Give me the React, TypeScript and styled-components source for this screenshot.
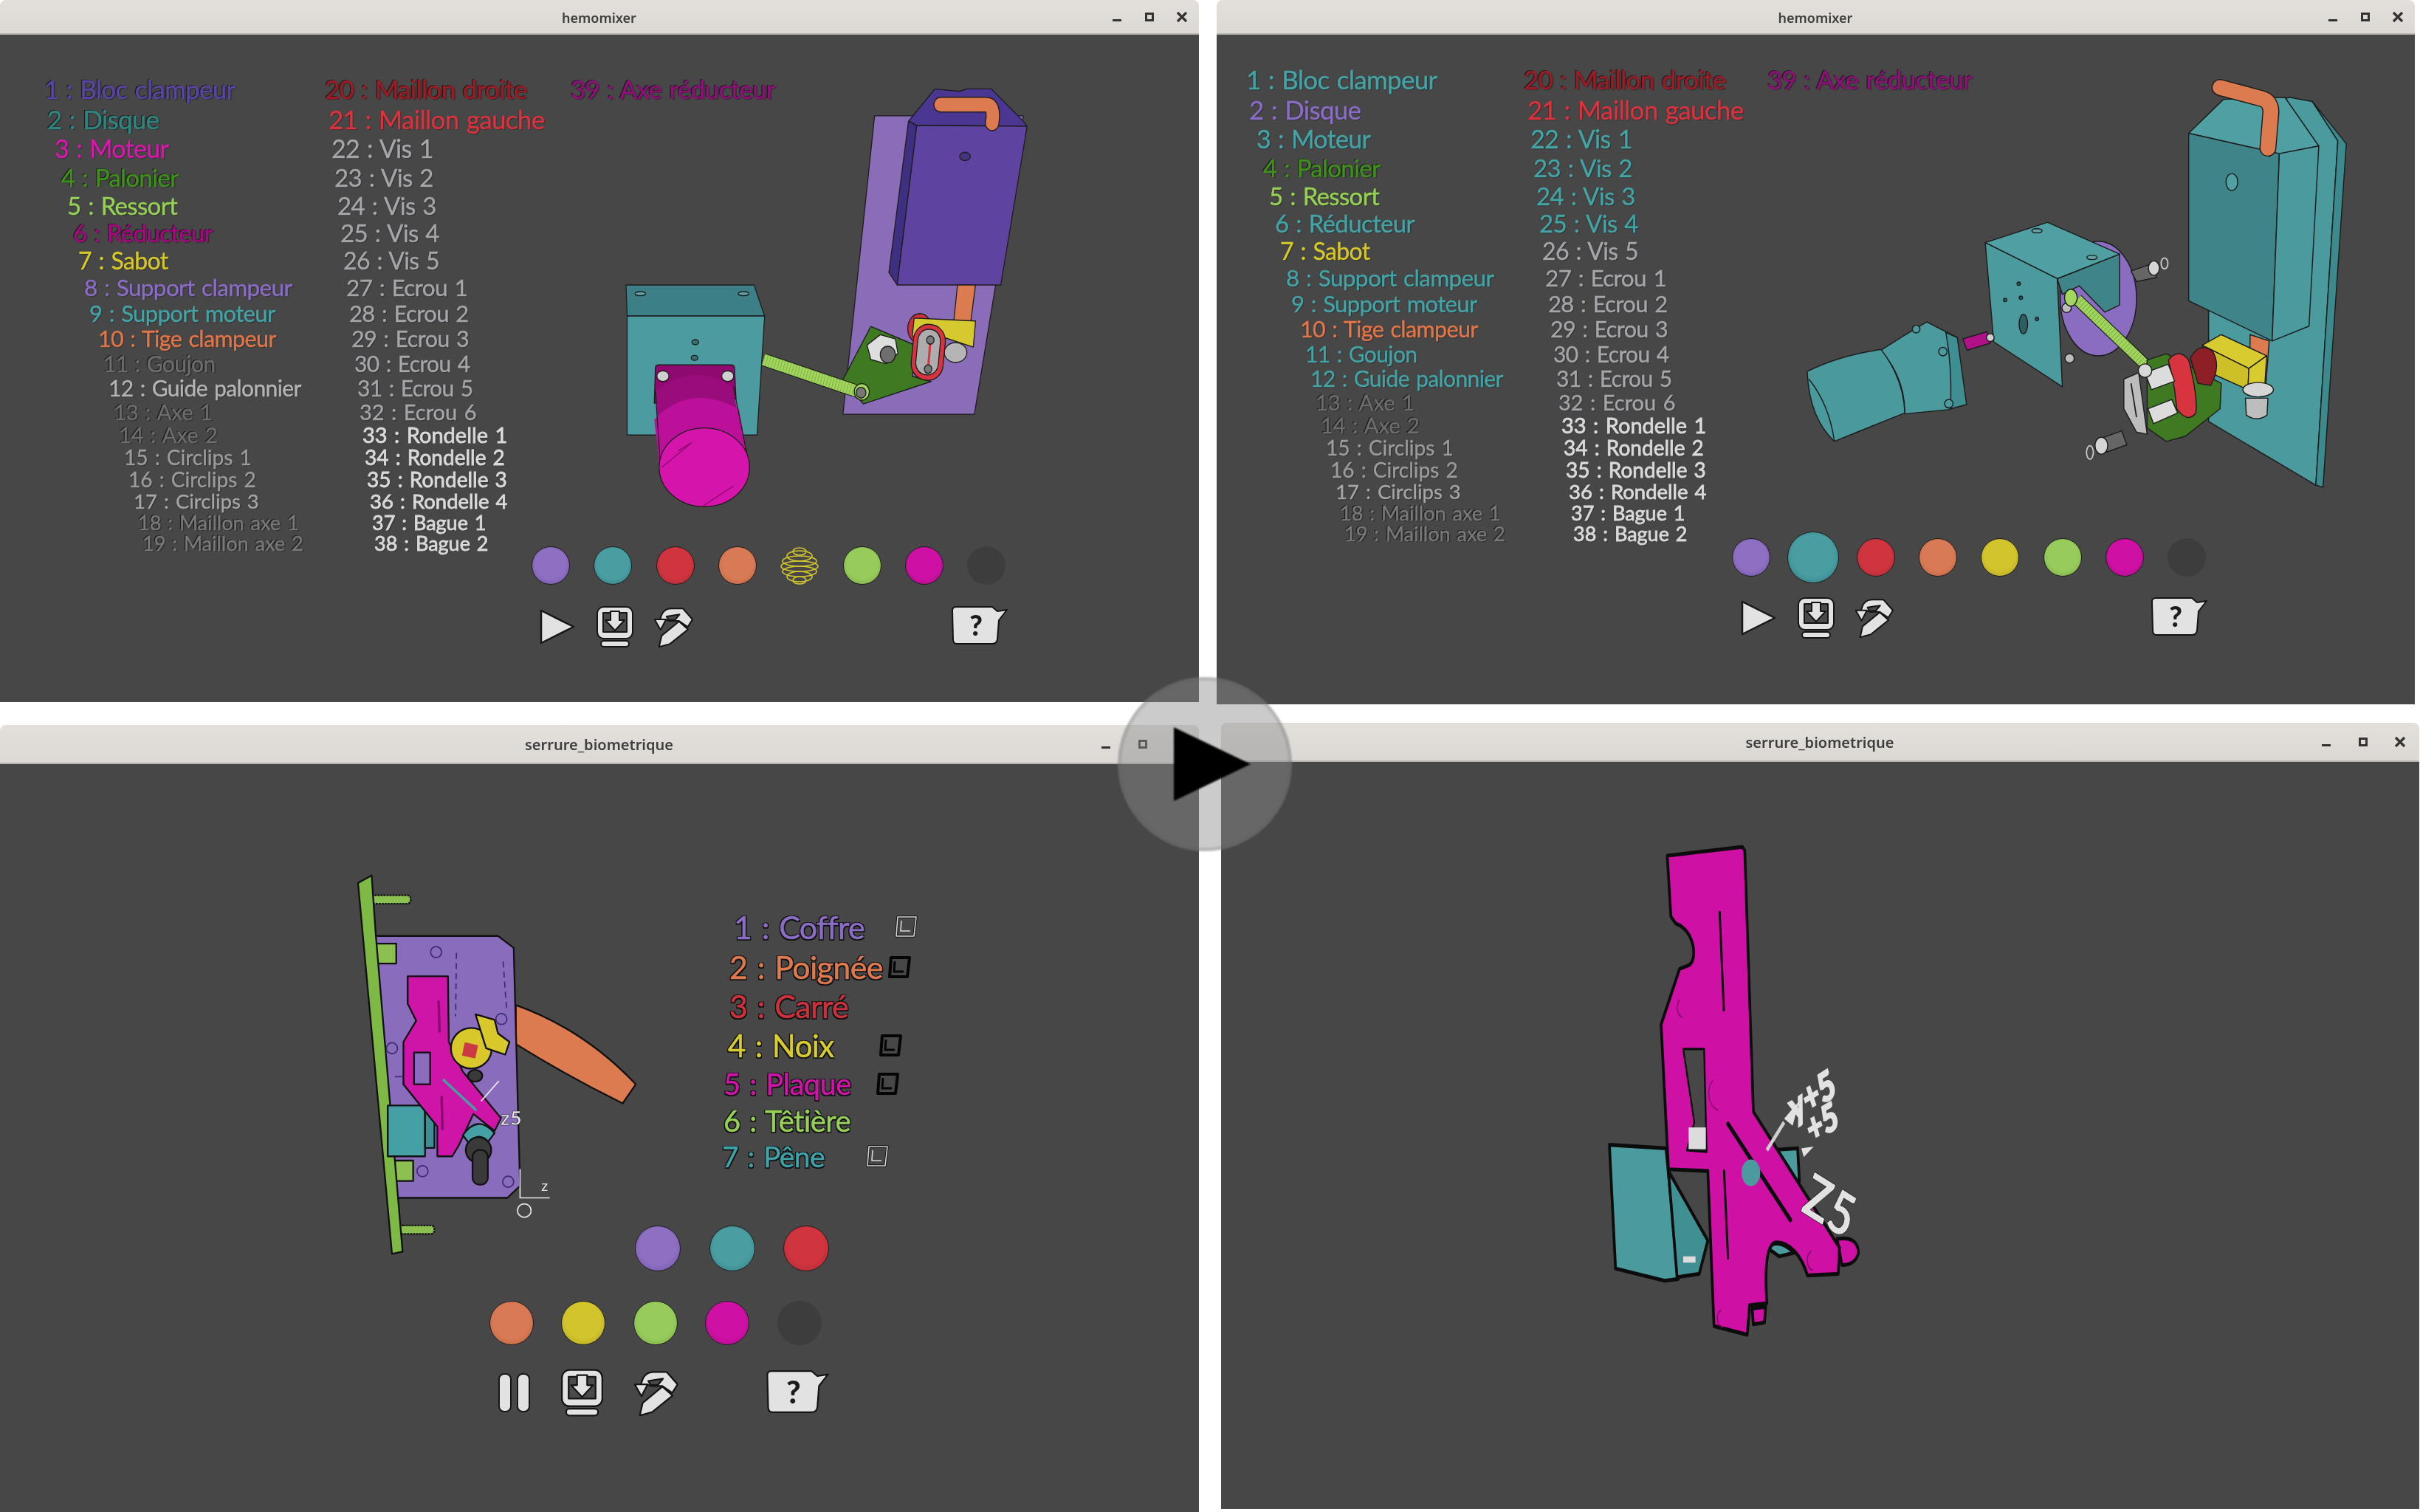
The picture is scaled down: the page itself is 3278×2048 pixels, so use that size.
import React from 'react';
import styled, { createGlobalStyle } from 'styled-components';

const GlobalStyle = createGlobalStyle`
  html, body {
    margin: 0;
    padding: 0;
    background: #fff;
    overflow: hidden;
  }
`;

const Page = styled.div`
  position: relative;
  width: 3278px;
  height: 2048px;
  background: #fff;
`;

const WindowRow = styled.div<{ $gap: number; $top?: number; $h: number }>`
  display: flex;
  align-items: flex-start;
  gap: ${({ $gap }) => $gap}px;
  height: ${({ $h }) => $h}px;
  margin-top: ${({ $top }) => $top ?? 0}px;
`;

const Window = styled.section<{ $w: number; $h: number; $top?: number }>`
  display: flex;
  flex-direction: column;
  flex: none;
  width: ${({ $w }) => $w}px;
  height: ${({ $h }) => $h}px;
  margin-top: ${({ $top }) => $top ?? 0}px;
`;

const TitleBar = styled.header<{ $h: number }>`
  display: grid;
  grid-template-columns: 1fr auto 1fr;
  align-items: center;
  flex: none;
  box-sizing: border-box;
  height: ${({ $h }) => $h}px;
  padding-right: 1px;
  background: linear-gradient(#e3e0dc, #dcd9d5);
  border-bottom: 2px solid #b7b5b0;
  border-radius: 8px 8px 0 0;
  filter: blur(0.4px);
`;

const Title = styled.h1<{ $size: number }>`
  grid-column: 2;
  margin: 2px 0 0;
  font: 600 ${({ $size }) => $size}px 'Noto Sans', 'Open Sans', sans-serif;
  color: #3e3e3e;
`;

const Controls = styled.div`
  grid-column: 3;
  display: flex;
  justify-content: flex-end;
`;

const Control = styled.span<{ $w: number }>`
  display: flex;
  align-items: center;
  justify-content: center;
  width: ${({ $w }) => $w}px;
  height: 24px;
`;

const MinIcon = styled.i`
  display: block;
  width: 12px;
  height: 3px;
  margin-top: 10px;
  background: #333;
`;

const MaxIcon = styled.i`
  display: block;
  box-sizing: border-box;
  width: 12px;
  height: 12px;
  border: 3px solid #333;
`;

const View = styled.main<{ $column?: boolean; $top?: number; $left?: number }>`
  flex: 1;
  display: flex;
  flex-direction: ${({ $column }) => ($column ? 'column' : 'row')};
  align-items: flex-start;
  box-sizing: border-box;
  padding: ${({ $top }) => $top ?? 0}px 0 0 ${({ $left }) => $left ?? 0}px;
  background: #474747;
  filter: blur(0.6px);
`;

const Legend = styled.div<{ $left: number; $top: number; $w: number }>`
  display: flex;
  flex: none;
  width: ${({ $w }) => $w}px;
  margin: ${({ $top }) => $top}px 0 0 ${({ $left }) => $left}px;
`;

const LegendColumn = styled.ul<{ $w: number }>`
  flex: none;
  width: ${({ $w }) => $w}px;
  margin: 0;
  padding: 0;
  list-style: none;
`;

const LegendRow = styled.li<{
  $indent: number;
  $h: number;
  $size: number;
  $color: string;
  $dim?: boolean;
  $strong?: boolean;
  $tight?: boolean;
}>`
  height: ${({ $h }) => $h}px;
  padding-left: ${({ $indent }) => $indent}px;
  font-family: Lato, 'Open Sans', sans-serif;
  font-size: ${({ $size }) => $size}px;
  line-height: ${({ $h }) => $h}px;
  letter-spacing: ${({ $tight }) => ($tight ? '-0.02em' : '0')};
  white-space: nowrap;
  word-spacing: 2px;
  color: ${({ $color }) => $color};
  -webkit-text-stroke: ${({ $strong }) => ($strong ? '0.9px' : '0.45px')} ${({ $color }) => $color};
  text-shadow: ${({ $dim }) =>
    $dim
      ? '-1.5px -1px 0 rgba(20,20,20,.8), 1.5px 1px 1px rgba(20,20,20,.5)'
      : '1px 1px 1px rgba(25,25,25,.6), -1px 0 0 rgba(25,25,25,.35)'};
`;

const PartList = styled.ul`
  margin: 97px 0 0 0;
  padding: 0;
  list-style: none;
`;

const PartRow = styled.li<{ $indent: number; $h: number; $size: number; $w: number; $color: string }>`
  display: flex;
  align-items: center;
  justify-content: space-between;
  box-sizing: border-box;
  width: ${({ $w }) => $w}px;
  height: ${({ $h }) => $h}px;
  margin-left: ${({ $indent }) => $indent}px;
  font-family: Lato, 'Open Sans', sans-serif;
  font-size: ${({ $size }) => $size}px;
  letter-spacing: -0.015em;
  white-space: nowrap;
  word-spacing: 3px;
  color: ${({ $color }) => $color};
  -webkit-text-stroke: 0.5px ${({ $color }) => $color};
  text-shadow: 1.5px 1.5px 0 #111, -1.5px -1.5px 0 #111, 1.5px -1.5px 0 #111, -1.5px 1.5px 0 #111;
`;

const Stage = styled.div<{ $top: number }>`
  display: flex;
  flex-direction: column;
  flex: none;
  margin-top: ${({ $top }) => $top}px;
`;

const Scene = styled.svg<{ $w: number; $h: number }>`
  display: block;
  flex: none;
  overflow: visible;
  width: ${({ $w }) => $w}px;
  height: ${({ $h }) => $h}px;
`;

const Palette = styled.div<{ $left: number; $top: number }>`
  display: flex;
  align-items: center;
  margin: ${({ $top }) => $top}px 0 0 ${({ $left }) => $left}px;
`;

const Slot = styled.span<{ $w: number; $h: number }>`
  display: flex;
  align-items: center;
  justify-content: center;
  flex: none;
  width: ${({ $w }) => $w}px;
  height: ${({ $h }) => $h}px;
`;

const Swatch = styled.span<{ $color: string; $edge: string; $size: number }>`
  display: block;
  box-sizing: border-box;
  width: ${({ $size }) => $size}px;
  height: ${({ $size }) => $size}px;
  border-radius: 50%;
  border: 1.5px solid #1f1f1f;
  background: radial-gradient(circle at 50% 45%, ${({ $color }) => $color} 55%, ${({ $edge }) => $edge} 100%);
`;

const GhostSwatch = styled.span<{ $size: number }>`
  display: block;
  width: ${({ $size }) => $size}px;
  height: ${({ $size }) => $size}px;
  border-radius: 50%;
  background: #3d3d3d;
`;

const Toolbar = styled.div<{ $left: number; $top: number; $gap: number }>`
  display: flex;
  align-items: center;
  gap: ${({ $gap }) => $gap}px;
  margin: ${({ $top }) => $top}px 0 0 ${({ $left }) => $left}px;
`;

const HelpSlot = styled.span<{ $left: number }>`
  display: block;
  margin-left: ${({ $left }) => $left}px;
`;

const Split = styled.div`
  display: flex;
  align-items: flex-start;
  padding-left: 400px;
`;

const SideColumn = styled.div`
  display: flex;
  flex-direction: column;
`;

const PlayOverlay = styled.div`
  position: absolute;
  left: 1514px;
  top: 917px;
  width: 236px;
  height: 236px;
  box-sizing: border-box;
  display: flex;
  align-items: center;
  justify-content: center;
  padding-left: 20px;
  border-radius: 50%;
  background: rgba(141, 141, 141, 0.457);
  border: 5px solid rgba(90, 90, 90, 0.18);
  filter: blur(0.8px);
`;

const names = [
  'Bloc clampeur', 'Disque', 'Moteur', 'Palonier', 'Ressort', 'Réducteur', 'Sabot', 'Support clampeur',
  'Support moteur', 'Tige clampeur', 'Goujon', 'Guide palonnier', 'Axe 1', 'Axe 2', 'Circlips 1', 'Circlips 2',
  'Circlips 3', 'Maillon axe 1', 'Maillon axe 2',
];
const namesRight = [
  'Maillon droite', 'Maillon gauche', 'Vis 1', 'Vis 2', 'Vis 3', 'Vis 4', 'Vis 5', 'Ecrou 1', 'Ecrou 2', 'Ecrou 3',
  'Ecrou 4', 'Ecrou 5', 'Ecrou 6', 'Rondelle 1', 'Rondelle 2', 'Rondelle 3', 'Rondelle 4', 'Bague 1', 'Bague 2',
];
const rowHeights = [41, 40, 40, 38, 38, 37, 37, 36, 34, 34, 34, 33, 31, 31, 31, 29, 30, 28, 28];
const rowSizes = [35, 35, 34, 33, 33, 33, 32, 31.5, 31, 30.5, 30, 30, 29, 29, 28, 28, 27.5, 27, 27];
const indentsLeft = [0, 4, 14, 23, 31, 39, 46, 54, 61, 73, 80, 87, 94, 101, 108, 114, 121, 127, 133];
const indentsRight = [0, 5, 9, 13, 17, 21, 25, 29, 33, 36, 40, 44, 47, 51, 54, 57, 61, 64, 67];

const PURPLE = '#8c6dc6';
const TEAL = '#45a3a6';
const GREY = '#a5a5aa';
const FAINT = '#6d6d6d';

type Tone = { color: string; dim?: boolean; strong?: boolean };

const frontTones: Tone[] = [
  { color: '#5a45a2', dim: true }, { color: '#2f8680', dim: true }, { color: '#d61aa9' },
  { color: '#40901e', dim: true }, { color: '#96d057' }, { color: '#a50a80', dim: true },
  { color: '#d6c72d' }, { color: PURPLE }, { color: TEAL }, { color: '#e0764a' },
  { color: FAINT, dim: true }, { color: '#b4b4b4' }, { color: FAINT, dim: true }, { color: FAINT, dim: true },
  { color: '#9b9b9b' }, { color: '#9b9b9b' }, { color: '#a5a5a5' }, { color: '#7a7a7a', dim: true }, { color: '#7a7a7a', dim: true },
];
const explodedTones: Tone[] = [
  { color: TEAL }, { color: PURPLE }, { color: TEAL }, { color: '#40901e', dim: true }, { color: '#96d057' },
  { color: TEAL }, { color: '#d6c72d' }, { color: TEAL }, { color: TEAL }, { color: '#e0764a' },
  { color: TEAL }, { color: TEAL }, { color: FAINT, dim: true }, { color: FAINT, dim: true },
  { color: '#9b9b9b' }, { color: '#9b9b9b' }, { color: '#a5a5a5' }, { color: '#7a7a7a', dim: true }, { color: '#7a7a7a', dim: true },
];
const rightTones = (tealUpTo: number): Tone[] =>
  namesRight.map((_, i) => {
    if (i === 0) return { color: '#9c1c26', dim: true };
    if (i === 1) return { color: '#d8343f' };
    if (i < tealUpTo) return { color: TEAL };
    if (i < 13) return { color: GREY };
    return { color: '#d9d9d9', strong: true };
  });

const HemoLegend: React.FC<{
  left: number;
  top: number;
  w: number;
  firstW: number;
  secondW: number;
  tones: Tone[];
  tonesRight: Tone[];
}> = ({ left, top, w, firstW, secondW, tones, tonesRight }) => (
  <Legend $left={left} $top={top} $w={w}>
    <LegendColumn $w={firstW}>
      {names.map((name, i) => (
        <LegendRow
          key={name}
          $indent={indentsLeft[i]}
          $h={rowHeights[i]}
          $size={rowSizes[i]}
          $color={tones[i].color}
          $dim={tones[i].dim}
          $tight={i < 12}
        >
          {i + 1} : {name}
        </LegendRow>
      ))}
    </LegendColumn>
    <LegendColumn $w={secondW}>
      {namesRight.map((name, i) => (
        <LegendRow
          key={name}
          $indent={indentsRight[i]}
          $h={rowHeights[i]}
          $size={rowSizes[i]}
          $color={tonesRight[i].color}
          $dim={tonesRight[i].dim}
          $strong={tonesRight[i].strong}
          $tight={i < 12}
        >
          {i + 20} : {name}
        </LegendRow>
      ))}
    </LegendColumn>
    <LegendColumn $w={0}>
      <LegendRow $indent={0} $h={41} $size={35} $color="#8e1078" $dim $tight>
        39 : Axe réducteur
      </LegendRow>
    </LegendColumn>
  </Legend>
);

const swatchColors: Record<string, [string, string]> = {
  purple: ['#8e6fc2', '#6b4fa6'],
  teal: ['#4a9ea2', '#2f7a80'],
  red: ['#cf343f', '#a82a34'],
  orange: ['#d87a55', '#b85f3e'],
  yellow: ['#d2c42d', '#a89c20'],
  green: ['#97cb5b', '#74a845'],
  pink: ['#cf10a5', '#a00c80'],
};

const WireSphere: React.FC<{ size: number }> = ({ size }) => (
  <svg width={size + 2} height={size + 2} viewBox="0 0 54 54" fill="none" stroke="#d6c72d" strokeWidth="1.6">
    <ellipse cx="27" cy="8" rx="9" ry="5" />
    <ellipse cx="27" cy="14" rx="17" ry="7" />
    <ellipse cx="27" cy="21" rx="23" ry="7" />
    <ellipse cx="27" cy="28" rx="25" ry="7" />
    <ellipse cx="27" cy="35" rx="23" ry="7" />
    <ellipse cx="27" cy="42" rx="17" ry="7" />
    <ellipse cx="27" cy="47" rx="9" ry="5" />
  </svg>
);

const Dot: React.FC<{ kind: string; size: number }> = ({ kind, size }) => {
  if (kind === 'ghost') return <GhostSwatch $size={size} />;
  if (kind === 'wire') return <WireSphere size={size} />;
  const [color, edge] = swatchColors[kind];
  return <Swatch $color={color} $edge={edge} $size={size} />;
};

const PlayIcon: React.FC<{ w: number; h: number }> = ({ w, h }) => (
  <svg width={w} height={h} viewBox="0 0 50 50">
    <path d="M3 3 L47 25 L3 47 Z" fill="#e2e2e2" stroke="#161616" strokeWidth="2.5" strokeLinejoin="round" />
  </svg>
);

const PauseIcon: React.FC<{ w: number; h: number }> = ({ w, h }) => (
  <svg width={w} height={h} viewBox="0 0 45 55" fill="#e2e2e2" stroke="#161616" strokeWidth="2">
    <rect x="2" y="2" width="16" height="51" rx="7" />
    <rect x="27" y="2" width="16" height="51" rx="7" />
  </svg>
);

const SaveIcon: React.FC<{ w: number; h: number }> = ({ w, h }) => (
  <svg width={w} height={h} viewBox="0 0 50 56" stroke="#141414" strokeWidth="2" strokeLinejoin="round">
    <rect x="1" y="1" width="48" height="43" rx="9" fill="#e2e2e2" />
    <rect x="9" y="9" width="32" height="26" fill="#4a4a4a" />
    <path d="M19 7 H31 V19 H38 L25 33 L12 19 H19 Z" fill="#e2e2e2" />
    <rect x="6" y="47" width="38" height="8" rx="4" fill="#e2e2e2" />
  </svg>
);

const RepairIcon: React.FC<{ w: number; h: number }> = ({ w, h }) => (
  <svg width={w} height={h} viewBox="0 0 157 162" stroke="#141414" strokeWidth="6" strokeLinejoin="round">
    <path d="M25 50 C30 18 48 6 70 6 L115 6 L154 50 L135 80 L100 56 L62 56 L48 52 Z" fill="#e2e2e2" />
    <path d="M2 50 H48 L26 92 Z" fill="#e2e2e2" />
    <path d="M50 38 L102 30 L84 52 L58 52 Z" fill="#4a4a4a" />
    <path d="M20 160 L30 116 L100 58 L136 90 L64 148 Z" fill="#e2e2e2" />
  </svg>
);

const HelpIcon: React.FC<{ w: number; h: number }> = ({ w, h }) => (
  <svg width={w} height={h} viewBox="0 0 76 54">
    <path
      d="M6 2 H55 L62 8 L75 6 L64 20 L62 46 Q61 52 55 52 H7 Q2 52 2 46 L1 7 Q1 2 6 2 Z"
      fill="#e2e2e2"
      stroke="#141414"
      strokeWidth="2"
      strokeLinejoin="round"
    />
    <text x="33" y="41" textAnchor="middle" fontFamily="Lato, sans-serif" fontWeight="900" fontSize="38" fill="#1b1b1b">
      ?
    </text>
  </svg>
);

const LockIcon: React.FC<{ open?: boolean; size: number }> = ({ open, size }) => (
  <svg width={size} height={size} viewBox="0 0 32 32" fill="none">
    {open ? (
      <>
        <path d="M5 3 H30 L27 29 H3 Z" stroke="#111" strokeWidth="3.5" strokeLinejoin="round" />
        <path d="M5 3 H30 L27 29 H3 Z" stroke="#d8d8d8" strokeWidth="1.6" strokeLinejoin="round" />
        <path d="M10 8 L9 22 H22" stroke="#d8d8d8" strokeWidth="1.6" />
      </>
    ) : (
      <>
        <path d="M5 3 H30 L27 29 H3 Z" stroke="#050505" strokeWidth="4" strokeLinejoin="round" />
        <path d="M10 8 L9 22 H22" stroke="#050505" strokeWidth="3" />
      </>
    )}
  </svg>
);

const Spring: React.FC<{ x1: number; y1: number; x2: number; y2: number; w: number }> = ({ x1, y1, x2, y2, w }) => (
  <>
    <line x1={x1} y1={y1} x2={x2} y2={y2} stroke="#1a1a1a" strokeWidth={w + 4} />
    <line x1={x1} y1={y1} x2={x2} y2={y2} stroke="#a3d65e" strokeWidth={w} />
    <line x1={x1} y1={y1} x2={x2} y2={y2} stroke="#7fb245" strokeWidth={w} strokeDasharray="2 6" />
  </>
);

// vue de face, coordonnées reprises à l'échelle 1.96 x 1.78
const FrontScene: React.FC = () => (
  <Scene $w={800} $h={640} viewBox="0 0 1568 1140" preserveAspectRatio="none">
    <g stroke="#1c1c1c" strokeWidth="2.5" strokeLinejoin="round">
      <path d="M950 137 L1345 137 L1215 857 L866 857 Z" fill="#8a6cb8" />
      <path d="M1040 150 L1110 72 L1175 78 L1195 72 L1260 72 L1345 150 L1355 162 L1062 160 Z" fill="#4b3692" />
      <path d="M1040 150 L1062 160 L1010 545 L988 515 Z" fill="#3e2f80" />
      <path d="M1062 160 L1355 162 L1285 545 L1010 545 Z" fill="#5e43a0" />
      <ellipse cx="1190" cy="235" rx="14" ry="10" fill="#46357f" />
      <path d="M1125 110 L1245 110 Q1270 110 1262 155" fill="none" stroke="#1c1c1c" strokeWidth="38" strokeLinecap="round" />
      <path d="M1125 110 L1245 110 Q1270 110 1262 155" fill="none" stroke="#dd7b50" strokeWidth="33" strokeLinecap="round" />
      <path d="M1170 545 L1218 545 L1205 635 L1160 635 Z" fill="#dd7b50" />
      <ellipse cx="1070" cy="650" rx="32" ry="36" fill="#c8323c" />
      <path d="M1055 625 L1218 632 L1212 695 L1135 672 L1050 670 Z" fill="#d6c82f" />
      <ellipse cx="1165" cy="708" rx="30" ry="24" fill="#b5b5b5" />
      <path d="M940 645 L1062 692 L1050 765 L1100 778 L920 832 L865 775 Z" fill="#3f7a22" />
      <polygon points="930,690 965,665 1005,675 1012,710 980,735 940,725" fill="#dedede" />
      <ellipse cx="985" cy="713" rx="20" ry="20" fill="#6f6f6f" />
      <rect x="1050" y="640" width="85" height="135" rx="40" fill="#d8343f" transform="rotate(6 1092 707)" />
      <rect x="1062" y="652" width="60" height="110" rx="28" fill="#adadb0" transform="rotate(6 1092 707)" />
      <line x1="1098" y1="680" x2="1092" y2="748" stroke="#d8343f" strokeWidth="6" />
      <circle cx="1098" cy="678" r="10" fill="#777" />
      <circle cx="1092" cy="748" r="10" fill="#777" />
    </g>
    <g stroke="#1c1c1c" strokeWidth="2.5" strokeLinejoin="round">
      <path d="M290 545 L630 545 L658 620 L293 620 Z" fill="#3c7f86" />
      <path d="M293 620 L658 620 L638 907 L293 907 Z" fill="#4b9ba0" />
      <ellipse cx="328" cy="566" rx="14" ry="5" fill="#5fa5a8" />
      <ellipse cx="602" cy="566" rx="14" ry="5" fill="#5fa5a8" />
      <ellipse cx="474" cy="683" rx="9" ry="6" fill="#3b6f72" />
      <ellipse cx="472" cy="721" rx="9" ry="6" fill="#3b6f72" />
    </g>
    <Spring x1={655} y1={725} x2={905} y2={802} w={28} />
    <g stroke="#1c1c1c" strokeWidth="2.5" strokeLinejoin="round">
      <circle cx="916" cy="803" r="20" fill="#a3d65e" />
      <circle cx="914" cy="805" r="13" fill="#777" />
      <path d="M368 745 Q368 738 378 738 L568 738 Q578 738 578 745 L582 820 L365 830 Z" fill="#8e0a70" />
      <ellipse cx="388" cy="765" rx="16" ry="13" fill="#cfcfcf" />
      <ellipse cx="560" cy="765" rx="16" ry="13" fill="#cfcfcf" />
      <path d="M370 800 Q470 730 572 790 L615 975 L380 990 Z" fill="#9a0c7c" stroke="none" />
      <path d="M365 870 Q460 780 590 845 L618 985 L380 990 Z" fill="#bd109a" stroke="none" />
      <path d="M368 800 L382 990 M575 790 L618 985" fill="none" />
      <ellipse cx="498" cy="985" rx="120" ry="95" fill="#d414aa" />
    </g>
    <path d="M385 985 L465 925 L428 945 M495 1078 L575 1030" fill="none" stroke="#8a0a6e" strokeWidth="2.5" />
  </Scene>
);

// vue éclatée
const ExplodedScene: React.FC = () => (
  <Scene $w={880} $h={620} viewBox="35 0 1533 1080" preserveAspectRatio="none">
    <g stroke="#1c1c1c" strokeWidth="2.5" strokeLinejoin="round">
      <path d="M1395 125 L1450 135 L1510 228 L1458 1040 L1205 890 L1205 200 Z" fill="#4a9a9e" />
      <path d="M1450 135 L1530 235 L1475 1045 L1458 1040 L1510 228 Z" fill="#3c8a8e" />
      <path d="M1158 210 L1240 130 L1385 125 L1465 240 L1372 258 Z" fill="#4f9fa3" />
      <path d="M1158 210 L1372 258 L1355 700 L1158 605 Z" fill="#3f8488" />
      <path d="M1372 258 L1465 240 L1442 665 L1355 700 Z" fill="#4a9a9e" />
      <ellipse cx="1260" cy="325" rx="14" ry="20" fill="#4f9fa3" />
      <path d="M1232 102 L1330 128 Q1352 134 1352 160 L1345 245" fill="none" stroke="#1c1c1c" strokeWidth="40" strokeLinecap="round" />
      <path d="M1232 102 L1330 128 Q1352 134 1352 160 L1345 245" fill="none" stroke="#dc7a50" strokeWidth="35" strokeLinecap="round" />
      <path d="M1303 685 L1348 700 L1340 805 L1302 800 Z" fill="#dc7a50" />
      <path d="M1190 710 L1235 685 L1342 735 L1300 765 Z" fill="#d8cb2f" />
      <path d="M1190 710 L1300 765 L1298 815 L1220 780 Z" fill="#cdbf28" />
      <path d="M1300 765 L1342 735 L1338 800 L1298 815 Z" fill="#d8cb2f" />
      <ellipse cx="1322" cy="815" rx="36" ry="17" fill="#d5d5d5" />
      <path d="M1292 835 L1345 835 L1343 875 Q1318 892 1294 875 Z" fill="#bdbdbd" />
    </g>
    <g stroke="#1c1c1c" strokeWidth="2.5" strokeLinejoin="round">
      <ellipse cx="945" cy="600" rx="90" ry="135" fill="#8a6cc0" />
      <path d="M848 553 L995 495 L995 615 L960 632 L900 570 L860 590 Z" fill="#3f8488" />
      <path d="M678 468 L825 420 L995 495 L848 553 Z" fill="#4f9fa3" />
      <path d="M678 468 L848 553 L860 808 L698 702 Z" fill="#4a9a9e" />
      <ellipse cx="768" cy="660" rx="10" ry="23" fill="#2f5f62" />
      <ellipse cx="800" cy="440" rx="12" ry="5" fill="#5fa5a8" />
      <ellipse cx="930" cy="503" rx="12" ry="5" fill="#5fa5a8" />
      <circle cx="757" cy="565" r="4" fill="#2f5f62" />
      <circle cx="725" cy="603" r="4" fill="#2f5f62" />
      <circle cx="762" cy="598" r="4" fill="#2f5f62" />
      <circle cx="800" cy="648" r="4" fill="#2f5f62" />
      <path d="M432 722 Q480 690 540 655 L612 692 L632 850 L590 862 L488 872 Q490 790 432 722 Z" fill="#4a9a9e" />
      <path d="M585 680 L612 692 L634 850 L596 860 Q600 760 585 680 Z" fill="#3f8e92" />
      <path d="M258 772 Q330 735 432 720 Q486 790 488 870 Q400 905 322 937 Q262 880 258 772 Z" fill="#49999d" />
      <path d="M262 790 Q310 850 322 937" fill="none" />
      <circle cx="515" cy="672" r="9" fill="#4a9a9e" />
      <circle cx="578" cy="725" r="10" fill="#4a9a9e" />
      <circle cx="592" cy="848" r="10" fill="#4a9a9e" />
      <path d="M625 695 L682 678 L690 705 L635 722 Z" fill="#b01088" />
      <circle cx="690" cy="692" r="9" fill="#cfcfcf" />
      <path d="M1022 535 L1070 518 L1082 550 L1035 560 Z" fill="#666" />
      <ellipse cx="1076" cy="528" rx="13" ry="17" fill="#d5d5d5" />
      <ellipse cx="1101" cy="517" rx="8" ry="13" fill="none" stroke="#cfcfcf" strokeWidth="3" />
      <path d="M950 930 L1000 912 L1012 945 L965 962 Z" fill="#666" />
      <ellipse cx="952" cy="947" rx="15" ry="20" fill="#d5d5d5" />
      <ellipse cx="925" cy="963" rx="8" ry="16" fill="none" stroke="#cfcfcf" strokeWidth="3" />
      <circle cx="870" cy="622" r="11" fill="#bcbcbc" />
      <circle cx="877" cy="741" r="11" fill="#bcbcbc" />
    </g>
    <Spring x1={895} y1={602} x2={1055} y2={755} w={24} />
    <g stroke="#1c1c1c" strokeWidth="2.5" strokeLinejoin="round">
      <ellipse cx="880" cy="598" rx="15" ry="20" fill="#a3d65e" />
      <path d="M1060 745 L1105 730 L1235 800 L1232 860 L1150 925 L1105 937 L1060 905 Z" fill="#3f7a22" />
      <path d="M1162 740 Q1185 700 1215 725 Q1235 760 1210 805 L1180 800 Z" fill="#8e1f26" />
      <path d="M1110 745 Q1135 715 1158 745 Q1180 830 1175 870 Q1155 895 1130 860 Q1125 800 1110 745 Z" fill="#d8343f" />
      <path d="M1055 775 L1110 755 L1125 795 L1070 815 Z" fill="#dcdcdc" />
      <path d="M1062 860 L1118 838 L1132 870 L1075 895 Z" fill="#dcdcdc" />
      <path d="M1005 790 L1040 775 L1060 920 L1035 915 L1005 860 Z" fill="#bdbdbd" />
      <line x1="1022" y1="800" x2="1035" y2="880" stroke="#1c1c1c" strokeWidth="3" />
      <circle cx="1055" cy="770" r="16" fill="#d8d8d8" />
    </g>
  </Scene>
);

// serrure complète
const LockScene: React.FC = () => (
  <Scene $w={440} $h={570} viewBox="0 0 766 993" preserveAspectRatio="none">
    <g stroke="#111" strokeWidth="4" strokeLinejoin="round">
      <path d="M520 403 Q680 460 803 590 L772 635 Q640 570 520 495 Z" fill="#dc7a50" />
      <rect x="172" y="144" width="100" height="20" rx="8" fill="#8cc152" strokeDasharray="5 2" />
      <rect x="245" y="923" width="83" height="20" rx="8" fill="#8cc152" strokeDasharray="5 2" />
      <path d="M188 240 L478 240 L515 268 L530 830 L500 858 L240 858 Z" fill="#8a6cbc" />
      <rect x="190" y="258" width="48" height="47" fill="#8cc152" />
      <rect x="230" y="770" width="48" height="48" fill="#8cc152" />
      <path d="M148 115 L180 97 L190 240 L253 985 L228 990 Z" fill="#7fb945" />
      <rect x="218" y="640" width="88" height="120" fill="#44a0a4" />
      <rect x="306" y="650" width="22" height="90" fill="#3d8f93" />
      <path d="M265 335 L360 335 L362 490 L395 560 L485 670 L470 700 L420 660 L385 735 L370 760 L335 760 L335 690 L255 590 L255 490 L285 440 L265 400 Z" fill="#cf14a8" />
      <rect x="280" y="515" width="38" height="75" fill="#8a6cbc" />
      <circle cx="415" cy="505" r="48" fill="#d8c82c" />
      <path d="M425 425 L470 438 L478 470 L505 490 L495 520 L450 505 Z" fill="#d8c82c" />
      <rect x="396" y="494" width="32" height="32" fill="#cc3a46" transform="rotate(12 412 510)" stroke="none" />
      <path d="M395 710 Q430 660 470 705 L455 725 Q430 700 410 730 Z" fill="#44a0a4" />
      <ellipse cx="424" cy="570" rx="17" ry="14" fill="#3a3a3a" />
      <circle cx="432" cy="745" r="30" fill="#3a3a3a" />
      <rect x="418" y="745" width="36" height="82" rx="16" fill="#3a3a3a" />
      <g fill="none" stroke="#3d2a74" strokeWidth="3">
        <circle cx="332" cy="278" r="13" />
        <circle cx="228" cy="505" r="13" />
        <circle cx="486" cy="436" r="13" />
        <circle cx="300" cy="795" r="13" />
        <circle cx="502" cy="820" r="13" />
        <line x1="380" y1="280" x2="378" y2="430" strokeDasharray="14 10" />
        <line x1="490" y1="300" x2="498" y2="410" strokeDasharray="14 10" />
        <path d="M235 572 L255 572" />
      </g>
      <g fill="none" stroke="#8a0a70" strokeWidth="6" strokeLinecap="round">
        <line x1="338" y1="395" x2="340" y2="465" />
        <line x1="345" y1="620" x2="347" y2="695" />
        <line x1="350" y1="580" x2="425" y2="650" stroke="#44a0a4" />
      </g>
    </g>
    <g fill="none" stroke="#e6e6e6" strokeWidth="3">
      <path d="M530 790 L530 858 L600 858" />
      <line x1="438" y1="630" x2="480" y2="582" />
      <circle cx="540" cy="888" r="16" />
    </g>
    <text x="580" y="842" fontFamily="Lato, sans-serif" fontSize="34" fill="#e6e6e6">z</text>
    <text x="484" y="686" fontFamily="Lato, sans-serif" fontWeight="700" fontSize="48" fill="#e6e6e6" stroke="#111" strokeWidth="1">z5</text>
  </Scene>
);

// plaque seule, zoom
const PlateScene: React.FC = () => (
  <Scene $w={500} $h={740} viewBox="0 0 1500 1568" preserveAspectRatio="none">
    <g stroke="#0c0c0c" strokeWidth="11" strokeLinejoin="round">
      <path d="M900 970 L1005 965 L1012 1060 L900 1060 Z" fill="#4a9a9e" />
      <path d="M880 1250 Q930 1220 990 1265 L930 1275 Z" fill="#4a9a9e" />
      <path d="M240 955 L470 965 L520 1340 L465 1345 L265 1310 Z" fill="#4a9a9e" />
      <path d="M480 1030 L640 1230 L605 1325 L515 1335 Z" fill="#3f8f93" />
      <rect x="540" y="1275" width="50" height="18" fill="#dcdcdc" stroke="none" />
      <path d="M1165 1225 Q1250 1215 1252 1265 Q1240 1300 1185 1300 Z" fill="#cf10a5" />
      <path d="M820 1425 L875 1420 L870 1465 L825 1470 Z" fill="#cf10a5" />
      <path
        d="M475 125 L780 100 L790 110 L825 860 L1175 1250 L1170 1325 L1045 1330 C1020 1270 970 1235 920 1235 C880 1235 870 1300 880 1410 L810 1415 L800 1500 L665 1475 L640 1030 L480 1025 L450 610 L525 450 L560 440 C600 430 590 340 510 320 L490 300 Z"
        fill="#cf10a5"
      />
      <path d="M540 680 L625 680 L635 975 L555 970 L585 890 Z" fill="#474747" strokeWidth="7" />
    </g>
    <rect x="562" y="905" width="70" height="62" fill="#dcdcdc" />
    <g fill="none" stroke="#0c0c0c" strokeLinecap="round">
      <line x1="688" y1="288" x2="705" y2="568" strokeWidth="9" />
      <line x1="706" y1="1030" x2="722" y2="1280" strokeWidth="9" />
      <line x1="722" y1="895" x2="975" y2="1170" strokeWidth="14" />
      <path d="M525 540 A28 28 0 0 0 535 588" strokeWidth="4" stroke="#7f0a66" />
      <path d="M660 770 A50 50 0 0 0 680 855" strokeWidth="4" stroke="#7f0a66" />
      <path d="M1060 1260 A30 30 0 0 0 1065 1315" strokeWidth="4" stroke="#7f0a66" />
      <path d="M692 1430 A26 26 0 0 0 700 1478" strokeWidth="4" stroke="#7f0a66" />
    </g>
    <circle cx="815" cy="1035" r="38" fill="#4a9a9e" />
    <path d="M880 970 L950 890" stroke="#cfcfcf" strokeWidth="12" />
    <path d="M950 880 L1010 830 L985 900 Z" fill="#e2e2e2" />
    <path d="M1020 965 L1070 960 L1030 990 Z" fill="#e2e2e2" />
    <text x="990" y="890" transform="rotate(-24 990 890)" fontFamily="Lato, sans-serif" fontWeight="900" fontSize="115" fill="#e2e2e2" stroke="#e2e2e2" strokeWidth="5">y+5</text>
    <text x="1060" y="950" transform="rotate(-22 1060 950)" fontFamily="Lato, sans-serif" fontWeight="900" fontSize="110" fill="#e2e2e2" stroke="#e2e2e2" strokeWidth="5">+5</text>
    <text x="1015" y="1145" transform="rotate(24 1015 1145)" fontFamily="Lato, sans-serif" fontWeight="900" fontSize="175" fill="#e2e2e2" stroke="#222" strokeWidth="2">Z5</text>
  </Scene>
);

const WinControls: React.FC<{ slot: number }> = ({ slot }) => (
  <Controls>
    <Control $w={slot}>
      <MinIcon />
    </Control>
    <Control $w={slot}>
      <MaxIcon />
    </Control>
    <Control $w={slot}>
      <svg width="16" height="16" viewBox="0 0 16 16" stroke="#333" strokeWidth="3.2">
        <path d="M2 2 L14 14 M14 2 L2 14" />
      </svg>
    </Control>
  </Controls>
);

const firstLine = ['purple', 'teal', 'red', 'orange', 'wire', 'green', 'pink', 'ghost'];
const secondLine = ['purple', 'teal', 'red', 'orange', 'yellow', 'green', 'pink', 'ghost'];

const parts = [
  { label: '1 : Coffre', color: '#8c6dc6', indent: 594, h: 56, size: 43, w: 249, lock: 'open' },
  { label: '2 : Poignée', color: '#df7a50', indent: 588, h: 53, size: 43, w: 246, lock: 'shut' },
  { label: '3 : Carré', color: '#cc323d', indent: 588, h: 53, size: 43, w: 200 },
  { label: '4 : Noix', color: '#d8cc30', indent: 586, h: 53, size: 42, w: 236, lock: 'shut' },
  { label: '5 : Plaque', color: '#cf14a8', indent: 580, h: 52, size: 40, w: 238, lock: 'shut' },
  { label: '6 : Têtière', color: '#97cf58', indent: 580, h: 47, size: 40, w: 200 },
  { label: '7 : Pêne', color: '#40a2a8', indent: 578, h: 49, size: 39, w: 226, lock: 'open' },
];

const App: React.FC = () => (
  <Page>
    <GlobalStyle />
    <WindowRow $gap={24} $h={954}>
      <Window $w={1624} $h={951}>
        <TitleBar $h={47}>
          <Title $size={18}>hemomixer</Title>
          <WinControls slot={44} />
        </TitleBar>
        <View>
          <HemoLegend left={60} top={53} w={640} firstW={380} secondW={333} tones={frontTones} tonesRight={rightTones(2)} />
          <Stage $top={33}>
            <FrontScene />
            <Palette $left={4} $top={11}>
              {firstLine.map((kind, i) => (
                <Slot key={i} $w={84.3} $h={70}>
                  <Dot kind={kind} size={52} />
                </Slot>
              ))}
            </Palette>
            <Toolbar $left={30} $top={19} $gap={28}>
              <PlayIcon w={50} h={50} />
              <SaveIcon w={50} h={56} />
              <RepairIcon w={53} h={55} />
              <HelpSlot $left={322}>
                <HelpIcon w={76} h={54} />
              </HelpSlot>
            </Toolbar>
          </Stage>
        </View>
      </Window>
      <Window $w={1623} $h={954}>
        <TitleBar $h={47}>
          <Title $size={18}>hemomixer</Title>
          <WinControls slot={44} />
        </TitleBar>
        <View>
          <HemoLegend left={40} top={40} w={632} firstW={376} secondW={330} tones={explodedTones} tonesRight={rightTones(6)} />
          <Stage $top={13}>
            <ExplodedScene />
            <Palette $left={10} $top={40}>
              {secondLine.map((kind, i) => (
                <Slot key={i} $w={84.3} $h={70}>
                  <Dot kind={kind} size={i === 1 ? 70 : 52} />
                </Slot>
              ))}
            </Palette>
            <Toolbar $left={37} $top={18} $gap={28}>
              <PlayIcon w={50} h={50} />
              <SaveIcon w={50} h={56} />
              <RepairIcon w={52} h={54} />
              <HelpSlot $left={321}>
                <HelpIcon w={76} h={54} />
              </HelpSlot>
            </Toolbar>
          </Stage>
        </View>
      </Window>
    </WindowRow>
    <WindowRow $gap={30} $top={25} $h={1069}>
      <Window $w={1624} $h={1066} $top={3}>
        <TitleBar $h={53}>
          <Title $size={20}>serrure_biometrique</Title>
          <WinControls slot={50} />
        </TitleBar>
        <View $column $top={95}>
          <Split>
            <LockScene />
            <SideColumn>
              <PartList>
                {parts.map((part) => (
                  <PartRow
                    key={part.label}
                    $indent={part.indent - 440}
                    $h={part.h}
                    $size={part.size}
                    $w={part.w}
                    $color={part.color}
                  >
                    {part.label}
                    {part.lock && <LockIcon open={part.lock === 'open'} size={32} />}
                  </PartRow>
                ))}
              </PartList>
              <Palette $left={1} $top={70}>
                {['purple', 'teal', 'red'].map((kind) => (
                  <Slot key={kind} $w={100.5} $h={62}>
                    <Dot kind={kind} size={62} />
                  </Slot>
                ))}
              </Palette>
            </SideColumn>
          </Split>
          <Palette $left={644} $top={39}>
            {['orange', 'yellow', 'green', 'pink', 'ghost'].map((kind) => (
              <Slot key={kind} $w={97.5} $h={62}>
                <Dot kind={kind} size={60} />
              </Slot>
            ))}
          </Palette>
          <Toolbar $left={674} $top={31} $gap={41}>
            <PauseIcon w={45} h={55} />
            <SaveIcon w={57} h={65} />
            <RepairIcon w={62} h={62} />
            <HelpSlot $left={77}>
              <HelpIcon w={85} h={60} />
            </HelpSlot>
          </Toolbar>
        </View>
      </Window>
      <Window $w={1623} $h={1065}>
        <TitleBar $h={53}>
          <Title $size={20}>serrure_biometrique</Title>
          <WinControls slot={50} />
        </TitleBar>
        <View $top={68} $left={446}>
          <PlateScene />
        </View>
      </Window>
    </WindowRow>
    <PlayOverlay>
      <svg width="104" height="100" viewBox="0 0 104 100">
        <path d="M0 0 L104 50 L0 100 Z" fill="#000" />
      </svg>
    </PlayOverlay>
  </Page>
);

export default App;
